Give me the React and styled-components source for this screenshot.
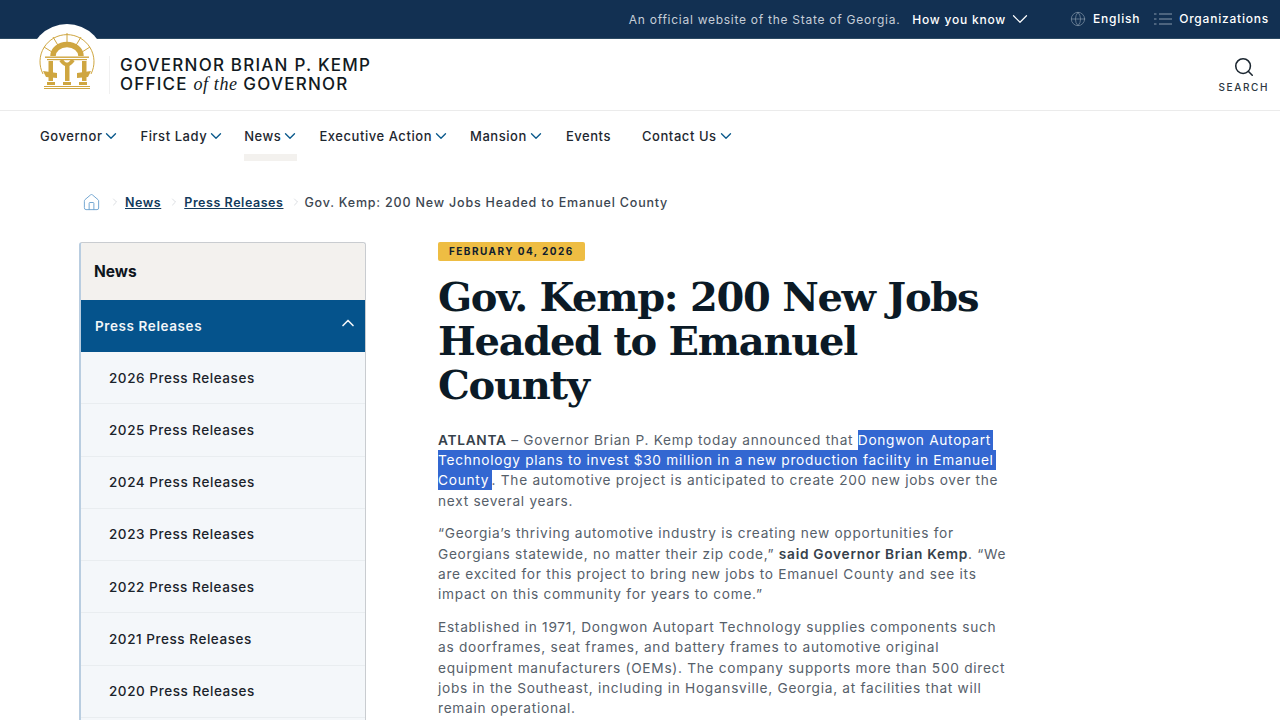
import React from 'react';
import styled, {createGlobalStyle} from 'styled-components';
import {ChevronDown, ChevronUp, ChevronRight, Search, Globe, House} from 'lucide-react';

const GlobalStyle = createGlobalStyle`
  html, body {
    margin: 0;
    padding: 0;
    background: #fff;
    font-family: Inter, "Liberation Sans", sans-serif;
  }
`

const Page = styled.div`
  height: 720px;
  overflow: hidden;
  position: relative;
`

const TopBar = styled.div`
  height: 38px;
  background: #123052;
  border-bottom: 1px solid #2c4a63;
  display: flex;
  align-items: center;
  justify-content: flex-end;
  padding-right: 11px;
  color: #fff;
  font-size: 12px;
  font-weight: 500;
  letter-spacing: .78px;
`

const Official = styled.span`
  color: #c6ced8;
  font-weight: 400;
  letter-spacing: .73px;
  margin-right: 12px;
`

const KnowToggle = styled.span`
  display: flex;
  align-items: center;
  gap: 1px;
  margin-right: 37px;
`

const TopLink = styled.span`
  display: flex;
  align-items: center;
  gap: 7px;
  margin-left: ${props => props.gap || 0}px;
  margin-top: -1px;
  svg { color: #8798ab; }
`

const Header = styled.header`
  height: 71px;
  border-bottom: 1px solid #ebebeb;
  display: flex;
  align-items: center;
  justify-content: space-between;
  padding: 0 11px 0 109px;
`

const SealBadge = styled.div`
  position: absolute;
  left: 29px;
  top: 24px;
  width: 76px;
  height: 76px;
  border-radius: 50%;
  background: #fff;
`

const SealRule = styled.div`
  height: 38px;
  border-left: 1px solid #f0f0f0;
  margin-right: 10px;
`

const Brand = styled.div`
  display: flex;
  align-items: center;
`

const BrandText = styled.div`
  padding-top: 1px;
  font-size: 17px;
  line-height: 19px;
  font-weight: 500;
  letter-spacing: 1.22px;
  color: #121a22;
  i {
    font-family: "Liberation Serif", serif;
    font-size: 18px;
    letter-spacing: .6px;
  }
`

const SearchButton = styled.div`
  display: flex;
  flex-direction: column;
  align-items: center;
  gap: 3px;
  font-size: 10px;
  font-weight: 500;
  letter-spacing: 1.6px;
  color: #2c3741;
  svg { color: #1b2630; }
`

const Nav = styled.nav`
  height: 50px;
  display: flex;
  padding-left: 40px;
`

const NavItem = styled.div`
  height: 50px;
  box-sizing: border-box;
  padding-top: 17px;
  margin-right: ${props => props.gap}px;
  display: flex;
  align-items: flex-start;
  gap: 2px;
  font-size: 13px;
  line-height: 16px;
  font-weight: 450;
  letter-spacing: .55px;
  color: #1e2730;
  border-bottom: ${props => props.active ? '7px solid #f3f1ee' : '7px solid transparent'};
  svg {
    color: #0b5a8c;
    margin: -1px -2px 0;
  }
`

const Breadcrumb = styled.div`
  display: flex;
  align-items: center;
  height: 20px;
  margin: 31px 0 0 82px;
  font-size: 12.5px;
  font-weight: 600;
  letter-spacing: .55px;
  color: #3c4650;
  svg { color: #c2c8ce; }
`

const HomeIcon = styled(House)`
  && { color: #6fa3d0; }
  margin-right: 8px;
`

const Crumb = styled.a`
  color: #123a5c;
  text-decoration: underline;
  margin: 0 7px 0 4px;
`

const Current = styled.span`
  font-weight: 550;
  letter-spacing: .81px;
  margin-left: 2px;
`

const Columns = styled.div`
  display: flex;
  margin: 30px 0 0 79px;
  align-items: flex-start;
`

const Sidebar = styled.aside`
  width: 287px;
  flex: none;
  box-sizing: border-box;
  border: 1px solid #c9ccd0;
  border-bottom: 0;
  border-left: 2px solid #b9cde0;
  border-radius: 3px 3px 0 0;
  background: #f4f7fa;
  padding-bottom: 40px;
`

const SideTitle = styled.div`
  height: 57px;
  background: #f3f1ee;
  display: flex;
  align-items: center;
  padding-left: 13px;
  font-size: 15.5px;
  font-weight: 700;
  color: #0e151c;
  border-radius: 3px 3px 0 0;
`

const SideActive = styled.div`
  height: 52px;
  background: #05538c;
  display: flex;
  align-items: center;
  justify-content: space-between;
  padding: 0 7px 0 14px;
  color: #f3f6f9;
  font-size: 13.5px;
  font-weight: 600;
  letter-spacing: .6px;
  svg { margin-top: -7px; }
`

const SideItem = styled.div`
  height: 52.25px;
  box-sizing: border-box;
  display: flex;
  align-items: center;
  padding-left: 28px;
  border-bottom: 1px solid #e9edf0;
  font-size: 13.5px;
  font-weight: 500;
  letter-spacing: .55px;
  color: #1b232b;
`

const Article = styled.article`
  width: 574px;
  margin-left: 72px;
`

const DateTag = styled.div`
  width: fit-content;
  background: #eebd43;
  border-radius: 2px;
  padding: 0 11px;
  height: 19px;
  line-height: 19px;
  font-size: 10px;
  font-weight: 700;
  letter-spacing: 1.45px;
  color: #10202e;
`

const Title = styled.h1`
  margin: 13.5px 0 0;
  font-family: "DejaVu Serif", serif;
  font-size: 40px;
  line-height: 44px;
  font-weight: 700;
  letter-spacing: -1.3px;
  color: #0b1a26;
`

const Para = styled.p`
  margin: 0 0 12px;
  font-size: 13.7px;
  line-height: 20.4px;
  letter-spacing: .71px;
  color: #56606a;
  &:first-of-type { margin-top: 23px; }
  b {
    font-weight: 600;
    color: #36414b;
  }
`

const Selected = styled.span`
  background: #3367d1;
  color: #fff;
  padding: 2px 2.5px 2px 0;
  box-decoration-break: clone;
  -webkit-box-decoration-break: clone;
`

function Seal() {
  const gold = '#cfa640';
  return (
    <svg width="76" height="76" viewBox="29 24 76 76" style={{display: 'block'}}>
      <g fill="none" stroke={gold}>
        <path d="M43 74 A27 27 0 1 1 91 74" strokeWidth="1" />
        <path d="M67 33V44M53 37L59 47M81 37L75 47M44 47L52 52M90 47L82 52" strokeWidth="1" />
        <path d="M53 56 A14 11.5 0 0 1 81 56" strokeWidth="5.5" />
        <path d="M61 60 Q67 69 73 60" strokeWidth="4" />
      </g>
      <g fill={gold}>
        <rect x="45" y="56.5" width="44" height="1.4" />
        <rect x="47" y="59" width="40" height="1.2" />
        <rect x="48.5" y="61" width="4.5" height="20" />
        <rect x="65" y="64" width="4.5" height="17" />
        <rect x="82" y="61" width="4.5" height="20" />
        <path d="M43 71L57 73V78L46 77Z" />
        <path d="M91 71L77 73V78L88 77Z" />
        <rect x="47" y="82" width="8" height="3" />
        <rect x="63" y="82" width="8" height="3" />
        <rect x="79" y="82" width="8" height="3" />
        <rect x="44" y="86" width="46" height="1" />
        <rect x="44" y="88" width="46" height="1" />
      </g>
    </svg>
  );
}

function ListLines() {
  return (
    <svg width="18" height="14" viewBox="0 0 18 14" fill="none" stroke="currentColor" strokeWidth="1">
      <path d="M5 2H18M5 7H18M5 12H18M0 2H2.5M0 7H2.5M0 12H2.5" />
    </svg>
  );
}

const navItems = [
  {label: 'Governor', gap: 22, arrow: true},
  {label: 'First Lady', gap: 21, arrow: true},
  {label: 'News', gap: 22, arrow: true, active: true},
  {label: 'Executive Action', gap: 22, arrow: true},
  {label: 'Mansion', gap: 23, arrow: true},
  {label: 'Events', gap: 31},
  {label: 'Contact Us', gap: 0, arrow: true},
];

const years = [2026, 2025, 2024, 2023, 2022, 2021, 2020];

export default function App() {
  return (
    <Page>
      <GlobalStyle />
      <TopBar>
        <Official>An official website of the State of Georgia.</Official>
        <KnowToggle>How you know <ChevronDown size={26} strokeWidth={1.1} /></KnowToggle>
        <TopLink><Globe size={16} strokeWidth={1} />English</TopLink>
        <TopLink gap={14}><ListLines />Organizations</TopLink>
      </TopBar>
      <Header>
        <Brand>
          <SealRule />
          <BrandText>
            GOVERNOR BRIAN P. KEMP<br />
            OFFICE <i>of the</i> GOVERNOR
          </BrandText>
        </Brand>
        <SearchButton>
          <Search size={22} strokeWidth={1.7} />
          SEARCH
        </SearchButton>
      </Header>
      <SealBadge><Seal /></SealBadge>
      <Nav>
        {navItems.map(item => (
          <NavItem key={item.label} gap={item.gap} active={item.active}>
            {item.label}
            {item.arrow && <ChevronDown size={18} strokeWidth={1.8} />}
          </NavItem>
        ))}
      </Nav>
      <Breadcrumb>
        <HomeIcon size={19} strokeWidth={1.2} />
        <ChevronRight size={12} strokeWidth={1.2} />
        <Crumb>News</Crumb>
        <ChevronRight size={12} strokeWidth={1.2} />
        <Crumb>Press Releases</Crumb>
        <ChevronRight size={12} strokeWidth={1.2} />
        <Current>Gov. Kemp: 200 New Jobs Headed to Emanuel County</Current>
      </Breadcrumb>
      <Columns>
        <Sidebar>
          <SideTitle>News</SideTitle>
          <SideActive>Press Releases <ChevronUp size={20} strokeWidth={2} /></SideActive>
          {years.map(year => <SideItem key={year}>{year} Press Releases</SideItem>)}
        </Sidebar>
        <Article>
          <DateTag>FEBRUARY 04, 2026</DateTag>
          <Title>Gov. Kemp: 200 New Jobs Headed to Emanuel County</Title>
          <Para>
            <b>ATLANTA</b> – Governor Brian P. Kemp today announced that <Selected>Dongwon Autopart Technology plans to invest $30 million in a new production facility in Emanuel County</Selected>. The automotive project is anticipated to create 200 new jobs over the next several years.
          </Para>
          <Para>
            “Georgia’s thriving automotive industry is creating new opportunities for Georgians statewide, no matter their zip code,” <b>said Governor Brian Kemp</b>. “We are excited for this project to bring new jobs to Emanuel County and see its impact on this community for years to come.”
          </Para>
          <Para>
            Established in 1971, Dongwon Autopart Technology supplies components such as doorframes, seat frames, and battery frames to automotive original equipment manufacturers (OEMs). The company supports more than 500 direct jobs in the Southeast, including in Hogansville, Georgia, at facilities that will remain operational.
          </Para>
        </Article>
      </Columns>
    </Page>
  );
}
